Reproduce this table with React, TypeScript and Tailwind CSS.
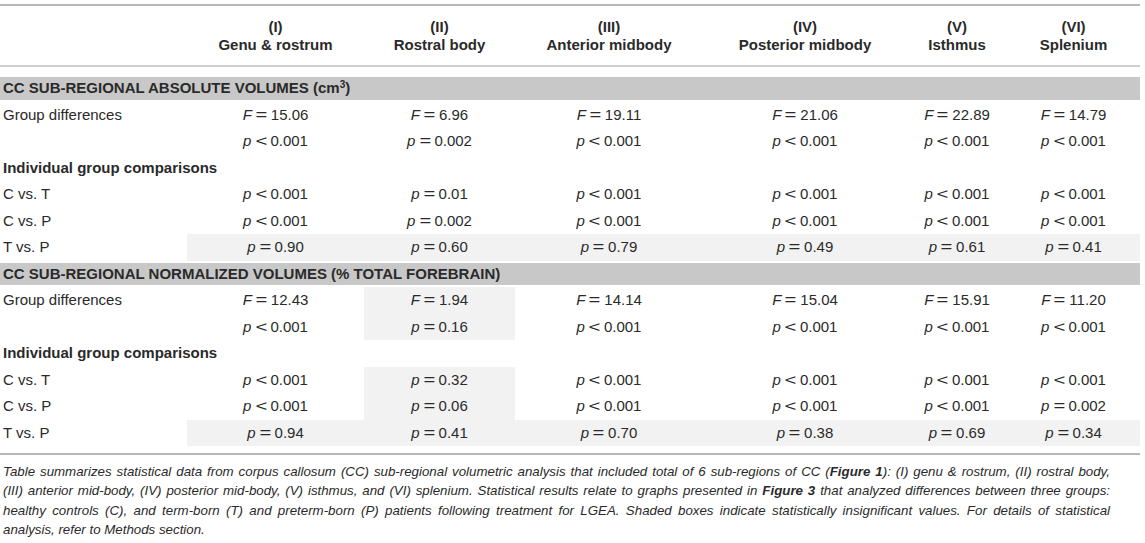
import React from "react";

const cols = "grid grid-cols-[187px_177px_151px_188px_204px_100px_133px]";

type Cell = { v: React.ReactNode; s?: boolean };

const Rel = ({ c }: { c: string }) => (
  <span className="inline-block w-[13px] mx-[3px] text-center">
    <span className="inline-block scale-x-[1.35]">{c}</span>
  </span>
);

const F = (n: string) => (
  <span className="whitespace-nowrap">
    <i>F</i>
    <Rel c="=" />
    {n}
  </span>
);
const PL = (n: string) => (
  <span className="whitespace-nowrap">
    <i>p</i>
    <Rel c="<" />
    {n}
  </span>
);
const PE = (n: string) => (
  <span className="whitespace-nowrap">
    <i>p</i>
    <Rel c="=" />
    {n}
  </span>
);

function Row({ label, cells, shadeRow, bold }: { label: React.ReactNode; cells?: Cell[]; shadeRow?: boolean; bold?: boolean }) {
  return (
    <div className={`${cols} h-[26.5px]`}>
      <div className={`flex items-center pl-[3px] whitespace-nowrap ${bold ? "font-bold" : ""}`}>{label}</div>
      {cells
        ? cells.map((c, i) => (
            <div
              key={i}
              className={`flex items-center justify-center ${shadeRow || c.s ? "bg-[#f2f2f2]" : ""}`}
            >
              {c.v}
            </div>
          ))
        : null}
    </div>
  );
}

function Bar({ children }: { children: React.ReactNode }) {
  return (
    <div className="h-[22.5px] bg-[#c8c8c8] flex items-center pl-[3px] font-bold whitespace-nowrap">{children}</div>
  );
}

const heads = [
  ["(I)", "Genu & rostrum"],
  ["(II)", "Rostral body"],
  ["(III)", "Anterior midbody"],
  ["(IV)", "Posterior midbody"],
  ["(V)", "Isthmus"],
  ["(VI)", "Splenium"],
];

const J = "whitespace-nowrap text-justify [text-align-last:justify]";

export default function App() {
  return (
    <div
      className="w-[1145px] h-[543px] bg-white text-[#2a2a2a] overflow-hidden"
      style={{ fontFamily: '"Liberation Sans", Arial, sans-serif' }}
    >
      <div className="w-[1140px] pt-[4px] text-[15px] leading-[18px]">
        <div className="h-[2px] bg-[#b8b8b8]" />
        <div className={`${cols} h-[59px]`}>
          <div />
          {heads.map((h) => (
            <div key={h[0]} className="flex flex-col items-center justify-center font-bold whitespace-nowrap">
              <div>{h[0]}</div>
              <div>{h[1]}</div>
            </div>
          ))}
        </div>
        <div className="h-[2px] bg-[#cfcfcf]" />
        <div className="mt-[10px]">
          <Bar>
            <span>
              CC SUB-REGIONAL ABSOLUTE VOLUMES (cm<sup className="text-[10px]">3</sup>)
            </span>
          </Bar>
        </div>
        <div className="mt-[2px]">
          <Row
            label="Group differences"
            cells={[F("15.06"), F("6.96"), F("19.11"), F("21.06"), F("22.89"), F("14.79")].map((v) => ({ v }))}
          />
          <Row
            label=""
            cells={[PL("0.001"), PE("0.002"), PL("0.001"), PL("0.001"), PL("0.001"), PL("0.001")].map((v) => ({ v }))}
          />
          <Row label="Individual group comparisons" bold />
          <Row
            label="C vs. T"
            cells={[PL("0.001"), PE("0.01"), PL("0.001"), PL("0.001"), PL("0.001"), PL("0.001")].map((v) => ({ v }))}
          />
          <Row
            label="C vs. P"
            cells={[PL("0.001"), PE("0.002"), PL("0.001"), PL("0.001"), PL("0.001"), PL("0.001")].map((v) => ({ v }))}
          />
          <Row
            label="T vs. P"
            shadeRow
            cells={[PE("0.90"), PE("0.60"), PE("0.79"), PE("0.49"), PE("0.61"), PE("0.41")].map((v) => ({ v }))}
          />
        </div>
        <div className="mt-[2px]">
          <Bar>CC SUB-REGIONAL NORMALIZED VOLUMES (% TOTAL FOREBRAIN)</Bar>
        </div>
        <div className="mt-[2px]">
          <Row
            label="Group differences"
            cells={[F("12.43"), F("1.94"), F("14.14"), F("15.04"), F("15.91"), F("11.20")].map((v, i) => ({ v, s: i === 1 }))}
          />
          <Row
            label=""
            cells={[PL("0.001"), PE("0.16"), PL("0.001"), PL("0.001"), PL("0.001"), PL("0.001")].map((v, i) => ({ v, s: i === 1 }))}
          />
          <Row label="Individual group comparisons" bold />
          <Row
            label="C vs. T"
            cells={[PL("0.001"), PE("0.32"), PL("0.001"), PL("0.001"), PL("0.001"), PL("0.001")].map((v, i) => ({ v, s: i === 1 }))}
          />
          <Row
            label="C vs. P"
            cells={[PL("0.001"), PE("0.06"), PL("0.001"), PL("0.001"), PL("0.001"), PE("0.002")].map((v, i) => ({ v, s: i === 1 }))}
          />
          <Row
            label="T vs. P"
            shadeRow
            cells={[PE("0.94"), PE("0.41"), PE("0.70"), PE("0.38"), PE("0.69"), PE("0.34")].map((v) => ({ v }))}
          />
        </div>
        <div className="mt-[7px] h-[2px] bg-[#b8b8b8]" />
      </div>
      <div className="mt-[7px] ml-[3px] w-[1107px] text-[13.3px] leading-[19.3px] italic text-[#2a2a2a]">
        <div className={J}>
          Table summarizes statistical data from corpus callosum (CC) sub-regional volumetric analysis that included total
          of 6 sub-regions of CC (<b>Figure 1</b>): (I) genu &amp; rostrum, (II) rostral body,
        </div>
        <div className={J}>
          (III) anterior mid-body, (IV) posterior mid-body, (V) isthmus, and (VI) splenium. Statistical results relate to
          graphs presented in <b>Figure 3</b> that analyzed differences between three groups:
        </div>
        <div className={J}>
          healthy controls (C), and term-born (T) and preterm-born (P) patients following treatment for LGEA. Shaded boxes
          indicate statistically insignificant values. For details of statistical
        </div>
        <div className="whitespace-nowrap">analysis, refer to Methods section.</div>
      </div>
    </div>
  );
}
